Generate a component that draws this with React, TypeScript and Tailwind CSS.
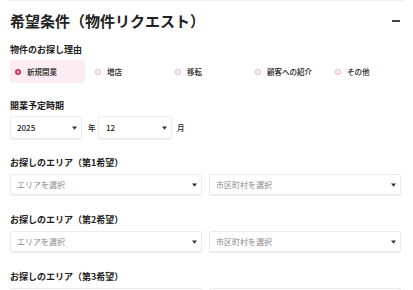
import * as React from "react";

const FONT = "font-['Noto_Sans_CJK_JP','Noto_Sans',sans-serif]";

const REASONS = ["新規開業", "増店", "移転", "顧客への紹介", "その他"];

function Caret({ className = "" }: { className?: string }) {
  return (
    <svg width="5" height="4" viewBox="0 0 5 4" className={className}>
      <path d="M0 0.5h5L2.5 3.8z" fill="#333" />
    </svg>
  );
}

function Select({ value, placeholder, className = "" }: { value?: string; placeholder?: string; className?: string }) {
  return (
    <div
      className={`flex items-center justify-between rounded-[2px] border border-[#ececec] bg-white pl-[6px] pr-[4px] shadow-[0_1px_1px_rgba(0,0,0,0.07)] ${className}`}
    >
      <span className={`text-[8px] leading-none ${value ? "font-medium text-[#222]" : "text-[#8a8a8a]"}`}>{value ?? placeholder}</span>
      <Caret />
    </div>
  );
}

function Label({ children, className = "" }: { children: React.ReactNode; className?: string }) {
  return <div className={`h-[13px] text-[9px] font-bold leading-[13px] text-[#222] ${className}`}>{children}</div>;
}

function AreaRow({ n, first }: { n: number; first?: boolean }) {
  return (
    <>
      <Label className={first ? "mt-[17px]" : "mt-[18px]"}>お探しのエリア（第{n}希望）</Label>
      <div className="mt-[5px] grid grid-cols-2 gap-[7px]">
        <Select placeholder="エリアを選択" className="h-[21px]" />
        <Select placeholder="市区町村を選択" className="h-[21px]" />
      </div>
    </>
  );
}

export default function App() {
  const [reason, setReason] = React.useState(0);

  return (
    <div className={`h-[290px] w-[413px] overflow-hidden bg-white ${FONT}`}>
      <div className="mx-[8px] border-t border-[#efefef] pl-[2px] pr-[4px]">
        <div className="mt-[10px] flex h-[20px] items-center justify-between">
          <h2 className="text-[15px] font-bold leading-[20px] text-[#222]">希望条件（物件リクエスト）</h2>
          <span className="mr-[1px] h-[2px] w-[8px] bg-[#444]" />
        </div>

        <Label className="mt-[12px]">物件のお探し理由</Label>
        <div className="mt-[4px] grid grid-cols-[repeat(5,75px)] gap-[5px]">
          {REASONS.map((r, i) => (
            <button
              key={r}
              onClick={() => setReason(i)}
              className={`flex h-[23px] items-center gap-[6px] rounded-[2px] pl-[5px] text-left ${
                reason === i ? "bg-[#fdedf3]" : ""
              }`}
            >
              <span
                className={`h-[6px] w-[6px] rounded-full ${
                  reason === i ? "border-[2px] border-[#c8336f]" : "border border-[#e6a9c1]"
                }`}
              />
              <span className="text-[7.5px] font-medium leading-none text-[#222]">{r}</span>
            </button>
          ))}
        </div>

        <Label className="mt-[16px]">開業予定時期</Label>
        <div className="mt-[4px] flex items-center">
          <Select value="2025" className="h-[23px] w-[72px]" />
          <span className="ml-[6px] mr-[3px] w-[7px] text-[7.5px] font-medium text-[#222]">年</span>
          <Select value="12" className="h-[23px] w-[74px] pl-[7px]" />
          <span className="ml-[5px] text-[7.5px] font-medium text-[#222]">月</span>
        </div>

        <AreaRow n={1} first />
        <AreaRow n={2} />
        <AreaRow n={3} />
      </div>
    </div>
  );
}
